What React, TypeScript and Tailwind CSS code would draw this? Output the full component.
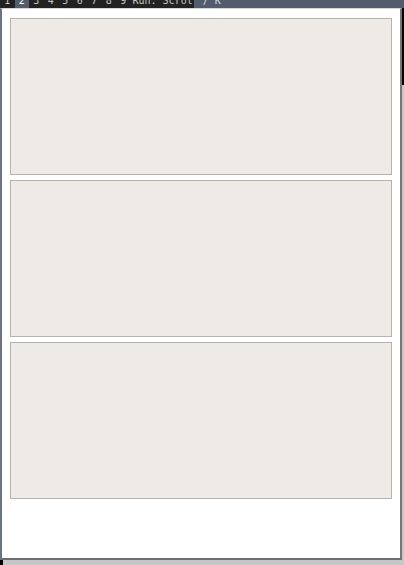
const tags = ['1', '2', '3', '4', '5', '6', '7', '8', '9'];

export default function App() {
  return (
    <div className="w-[404px] h-[565px] bg-[#c6c6c6] overflow-hidden flex flex-col" style={{ fontFamily: '"DejaVu Sans Mono", monospace' }}>
      {/* Top bar */}
      <div className="h-[8px] flex shrink-0 overflow-hidden bg-[#525c6c] text-[10px] leading-[10px] text-[#c4c4c4]">
        <div className="flex bg-[#222222] -mt-[4px]">
          {tags.map((t) => (
            <span key={t} className={`w-[14.5px] text-center ${t === '2' ? 'bg-[#525c6c] text-white' : ''}`}>
              {t}
            </span>
          ))}
          <span className="pl-[2px] pr-[1px] whitespace-pre">Run: Scrot</span>
        </div>
        <span className="-mt-[4px] pl-[9px] whitespace-pre text-[#d8d8d8]">/ K</span>
      </div>

      <div className="flex flex-1">
        {/* Window */}
        <div className="w-[402px] h-[552px] bg-white border-l-2 border-l-[#6b7380] border-r-2 border-r-[#74767a] border-b-2 border-b-[#6b6f75] border-t border-t-[#d4d4d4] flex flex-col gap-[5px] px-[8px] pt-[9px]">
          <div className="h-[157px] bg-[#eeebe6] border border-[#b6b3ae]" />
          <div className="h-[157px] bg-[#eeebe6] border border-[#b6b3ae]" />
          <div className="h-[157px] bg-[#eeebe6] border border-[#b6b3ae]" />
        </div>
        {/* Right strip */}
        <div className="flex-1 flex flex-col">
          <div className="h-[77px] bg-black" />
        </div>
      </div>

      {/* Bottom strip */}
      <div className="h-[5px] flex shrink-0">
        <div className="w-[3px] bg-black" />
      </div>
    </div>
  );
}
